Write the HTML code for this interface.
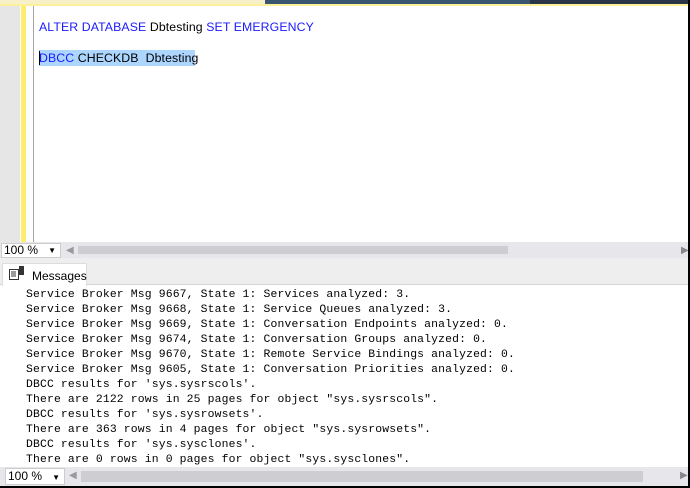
<!DOCTYPE html>
<html><head><style>
*{margin:0;padding:0;box-sizing:border-box}
body{width:690px;height:488px;position:relative;overflow:hidden;background:#fff;font-family:"Liberation Sans",sans-serif}
.a{position:absolute}
.mono{font-family:"Liberation Mono",monospace;font-size:11.4px;letter-spacing:0.15px;color:#000;white-space:pre}
</style></head><body>
<div class="a" style="left:0;top:0;width:265px;height:4px;background:#f7f0c8"></div>
<div class="a" style="left:265px;top:0;width:265px;height:4px;background:#3b5470"></div>
<div class="a" style="left:530px;top:0;width:160px;height:4px;background:#293447"></div>
<div class="a" style="left:0;top:4px;width:690px;height:2px;background:#fdf09a"></div>
<div class="a" style="left:0;top:6px;width:20px;height:236px;background:#e6e6e6"></div>
<div class="a" style="left:21px;top:6px;width:5px;height:236px;background:#fdee70"></div>
<div class="a" style="left:33px;top:6px;width:1px;height:236px;background:#a5a5a5"></div>
<div class="a" style="left:39px;top:50px;width:156px;height:16px;background:#add6ff"></div>
<div class="a" style="left:39px;top:20px;font-size:12.3px;white-space:pre;color:#000;letter-spacing:0.1px"><span style="color:#1a1aff">ALTER DATABASE</span> Dbtesting <span style="color:#1a1aff">SET EMERGENCY</span></div>
<div class="a" style="left:39px;top:51px;font-size:12.3px;white-space:pre;color:#000;letter-spacing:0.1px"><span style="color:#1a1aff">DBCC</span> CHECKDB  Dbtesting</div>
<div class="a" style="left:39px;top:51px;width:1px;height:14px;background:#000"></div>
<div class="a" style="left:0;top:242px;width:688px;height:16px;background:#e6e6eb"></div>
<div class="a" style="left:1px;top:243px;width:60px;height:15px;background:#fff;border:1px solid #ccc;font-size:12px;padding-left:2px;line-height:13px">100 %<span style="position:absolute;right:4px;top:0;font-size:8px">▼</span></div>
<div class="a" style="left:66px;top:245px;font-size:10px;color:#999">◀</div>
<div class="a" style="left:78px;top:246px;width:430px;height:8px;background:#cdcdd2"></div>
<div class="a" style="left:681px;top:245px;font-size:10px;color:#888">▶</div>
<div class="a" style="left:0;top:258px;width:688px;height:27px;background:#eeeeee;border-bottom:1px solid #d5d5d5"></div>
<div class="a" style="left:2px;top:263px;width:85px;height:23px;background:#fff;border:1px solid #ddd;border-bottom:none;font-size:12px;padding:5px 0 0 29px">Messages</div>
<svg class="a" style="left:9px;top:266px" width="16" height="14"><rect x="0.5" y="3.5" width="9" height="10" fill="#fff" stroke="#333"/><path d="M2 6h5M2 8h5M2 10h5" stroke="#333"/><rect x="10" y="0" width="5" height="9" fill="#333"/></svg>
<div class="a mono" style="left:26px;top:288px;line-height:15px">Service Broker Msg 9667, State 1: Services analyzed: 3.
Service Broker Msg 9668, State 1: Service Queues analyzed: 3.
Service Broker Msg 9669, State 1: Conversation Endpoints analyzed: 0.
Service Broker Msg 9674, State 1: Conversation Groups analyzed: 0.
Service Broker Msg 9670, State 1: Remote Service Bindings analyzed: 0.
Service Broker Msg 9605, State 1: Conversation Priorities analyzed: 0.
DBCC results for 'sys.sysrscols'.
There are 2122 rows in 25 pages for object "sys.sysrscols".
DBCC results for 'sys.sysrowsets'.
There are 363 rows in 4 pages for object "sys.sysrowsets".
DBCC results for 'sys.sysclones'.
There are 0 rows in 0 pages for object "sys.sysclones".</div>
<div class="a" style="left:0;top:467px;width:688px;height:19px;background:#e6e6eb"></div>
<div class="a" style="left:5px;top:468px;width:60px;height:17px;background:#fff;border:1px solid #ccc;font-size:12px;padding-left:2px;line-height:15px">100 %<span style="position:absolute;right:4px;top:1px;font-size:8px">▼</span></div>
<div class="a" style="left:69px;top:470px;font-size:10px;color:#999">◀</div>
<div class="a" style="left:81px;top:471px;width:562px;height:11px;background:#cdcdd2"></div>
<div class="a" style="left:680px;top:470px;font-size:10px;color:#888">▶</div>
<div class="a" style="left:688px;top:0;width:2px;height:488px;background:#000"></div>
<div class="a" style="left:0;top:486px;width:690px;height:2px;background:#000"></div>
</body></html>
